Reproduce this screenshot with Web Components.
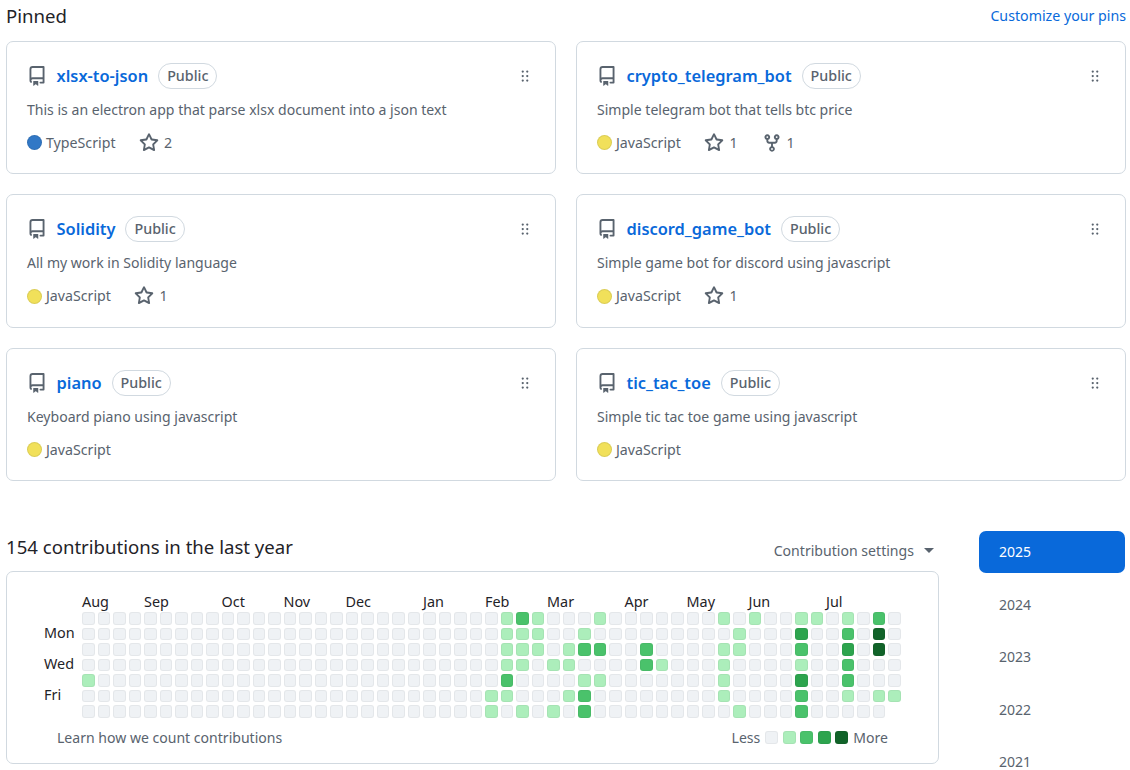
<!DOCTYPE html>
<html><head><meta charset="utf-8"><title>Profile</title>
<style>
html,body{margin:0;padding:0;height:770px;overflow:hidden;background:#fff}
body{font-family:"Noto Sans","Liberation Sans",sans-serif;color:#1f2328}
</style></head><body>
<profile-page></profile-page>
<script>
const P={
repo:'M2 2.5A2.5 2.5 0 0 1 4.5 0h8.75a.75.75 0 0 1 .75.75v12.5a.75.75 0 0 1-.75.75h-2.5a.75.75 0 0 1 0-1.5h1.75v-2h-8a1 1 0 0 0-.714 1.7.75.75 0 1 1-1.072 1.05A2.495 2.495 0 0 1 2 11.5Zm10.5-1h-8a1 1 0 0 0-1 1v6.708A2.486 2.486 0 0 1 4.5 9h8ZM5 12.25a.25.25 0 0 1 .25-.25h3.5a.25.25 0 0 1 .25.25v3.25a.25.25 0 0 1-.4.2l-1.45-1.087a.249.249 0 0 0-.3 0L5.4 15.7a.25.25 0 0 1-.4-.2Z',
star:'M8 .25a.75.75 0 0 1 .673.418l1.882 3.815 4.21.612a.75.75 0 0 1 .416 1.279l-3.046 2.97.719 4.192a.751.751 0 0 1-1.088.791L8 12.347l-3.766 1.98a.75.75 0 0 1-1.088-.79l.72-4.194L.818 6.374a.75.75 0 0 1 .416-1.28l4.21-.611L7.327.668A.75.75 0 0 1 8 .25Zm0 2.445L6.615 5.5a.75.75 0 0 1-.564.41l-3.097.45 2.24 2.184a.75.75 0 0 1 .216.664l-.528 3.084 2.769-1.456a.75.75 0 0 1 .698 0l2.77 1.456-.53-3.084a.75.75 0 0 1 .216-.664l2.24-2.183-3.096-.45a.75.75 0 0 1-.564-.41L8 2.694Z',
fork:'M5 5.372v.878c0 .414.336.75.75.75h4.5a.75.75 0 0 0 .75-.75v-.878a2.25 2.25 0 1 1 1.5 0v.878a2.25 2.25 0 0 1-2.25 2.25h-1.5v2.128a2.251 2.251 0 1 1-1.5 0V8.5h-1.5A2.25 2.25 0 0 1 3.5 6.25v-.878a2.25 2.25 0 1 1 1.5 0ZM5 3.25a.75.75 0 1 0-1.5 0 .75.75 0 0 0 1.5 0Zm6.75.75a.75.75 0 1 0 0-1.5.75.75 0 0 0 0 1.5Zm-3 8.75a.75.75 0 1 0-1.5 0 .75.75 0 0 0 1.5 0Z',
grab:'M10 13a1 1 0 1 1 0-2 1 1 0 0 1 0 2Zm-4 0a1 1 0 1 1 0-2 1 1 0 0 1 0 2Zm1-5a1 1 0 1 1-2 0 1 1 0 0 1 2 0Zm3 1a1 1 0 1 1 0-2 1 1 0 0 1 0 2Zm1-5a1 1 0 1 1-2 0 1 1 0 0 1 2 0ZM6 5a1 1 0 1 1 0-2 1 1 0 0 1 0 2Z'};
const svg=(n,s)=>`<svg width="${s}" height="${s}" viewBox="0 0 16 16" fill="currentColor" aria-hidden="true"><path d="${P[n]}"/></svg>`;
const LANG={TypeScript:'#3178c6',JavaScript:'#f1e05a'};

class PinCard extends HTMLElement{
  connectedCallback(){
    if(this.shadowRoot)return;
    const a=k=>this.getAttribute(k);
    const lang=a('lang-name');
    this.attachShadow({mode:'open'}).innerHTML=`<style>
:host{display:block;box-sizing:border-box;border:1px solid #d1d9e0;border-radius:7px;background:#fff;padding:20px 20px 0 20px;position:relative;height:133.5px;color:#59636e;line-height:22px}
.t{display:flex;align-items:center;height:28px;}
.r{display:flex;width:29.5px;color:#59636e}
.n{font-weight:600;font-size:16.4px;color:#0969da}
.b{margin-left:10px;border:1px solid #d1d9e0;border-radius:14px;font-size:14.3px;font-weight:500;padding:0 8px;height:24px;line-height:24px;color:#59636e}
.g{position:absolute;right:21px;top:25px;display:flex;color:#59636e}
p{margin:9px 0 0;font-size:14.05px;height:22px;line-height:22px;white-space:nowrap}
.m{display:flex;align-items:center;margin-top:11px;height:22px;font-size:14.2px}
.d{width:15px;height:15px;border-radius:50%;margin:0 4px 0 0;box-sizing:border-box;border:1px solid rgba(31,35,40,.1);background:${LANG[lang]}}
.s{display:flex;align-items:center;gap:5px;margin-left:23.5px}
.s+.s{margin-left:24px}
svg{display:block}
</style>
<div class="t"><span class="r">${svg('repo',20)}</span><span class="n">${a('name')}</span><span class="b">Public</span></div>
<span class="g">${svg('grab',18)}</span>
<p><slot></slot></p>
<div class="m"><span class="d"></span><span>${lang}</span>${a('stars')?`<span class="s">${svg('star',20)}<span>${a('stars')}</span></span>`:''}${a('forks')?`<span class="s">${svg('fork',20)}<span>${a('forks')}</span></span>`:''}</div>`;
  }
}
customElements.define('pin-card',PinCard);

const LIT={0:{4:1},26:{5:1,6:1},27:{0:1,1:1,2:1,3:1,4:2,5:1},28:{0:2,1:1,2:1,3:1,6:1},29:{0:1,1:1,2:1},30:{3:1,6:1},31:{2:1,3:1,5:1},32:{1:1,2:2,4:1,5:2,6:2},33:{0:1,2:2,4:1},36:{2:2,3:2},37:{3:1},41:{0:1,2:1,3:1,4:1,5:1},42:{1:1,2:1,6:1},43:{0:1},46:{0:1,1:3,2:2,3:1,4:3,5:2,6:2},47:{0:1},49:{0:1,1:2,2:3,3:2,4:2,5:1},51:{0:2,1:4,2:4,5:1},52:{5:1}};
const MONTHS=[['Aug',0],['Sep',4],['Oct',9],['Nov',13],['Dec',17],['Jan',22],['Feb',26],['Mar',30],['Apr',35],['May',39],['Jun',43],['Jul',48]];
const COL=['#eff2f5','#aceebb','#4ac26b','#2da44e','#116329'];
class ContribGraph extends HTMLElement{
  connectedCallback(){
    if(this.shadowRoot)return;
    let cells='';
    for(let c=0;c<53;c++)for(let r=0;r<7;r++){
      if(c===52&&r===6)continue;
      const l=(LIT[c]&&LIT[c][r])||0;
      cells+=`<i class="l${l}" style="grid-column:${c+1};grid-row:${r+1}"></i>`;
    }
    const mon=MONTHS.map(([m,c])=>`<span style="grid-column:${c+1}/span 4">${m}</span>`).join('');
    const legend=[0,1,2,3,4].map(l=>`<i class="l${l}"></i>`).join('');
    this.attachShadow({mode:'open'}).innerHTML=`<style>
:host{display:block;box-sizing:border-box;width:933px;height:193px;border:1px solid #d1d9e0;border-radius:7px;background:#fff;padding:20px 0 0 0;font-size:14.4px;color:#1f2328}
.w{display:grid;grid-template-columns:75px 1fr;}
.mo{grid-column:2;display:grid;grid-template-columns:repeat(53,12.5px);column-gap:3px;height:20px;line-height:20px;}
.mo span{white-space:nowrap}
.da{display:grid;grid-template-rows:repeat(7,12.5px);row-gap:3px;padding-left:37px;line-height:10.5px}
.da span{white-space:nowrap}
.gr{display:grid;grid-template-columns:repeat(53,12.5px);grid-template-rows:repeat(7,12.5px);gap:3px}
i{display:block;width:12.5px;height:12.5px;border-radius:3px;box-sizing:border-box;border:1px solid rgba(31,35,40,.05)}
.l0{background:${COL[0]}}.l1{background:${COL[1]}}.l2{background:${COL[2]}}.l3{background:${COL[3]}}.l4{background:${COL[4]}}
.f{display:flex;justify-content:space-between;align-items:center;margin-top:9px;padding:0 50px 0 50px;color:#59636e;height:22px;font-size:14.05px}
.lg{display:flex;align-items:center;gap:5px}
.lg .gap{display:flex;gap:4.5px}
.lg i{width:13px;height:13px}
</style>
<div class="w"><div class="mo">${mon}</div>
<div class="da"><span style="grid-row:2">Mon</span><span style="grid-row:4">Wed</span><span style="grid-row:6">Fri</span></div>
<div class="gr">${cells}</div></div>
<div class="f"><span>Learn how we count contributions</span><span class="lg"><span>Less</span><span class="gap">${legend}</span><span>More</span></span></div>`;
  }
}
customElements.define('contrib-graph',ContribGraph);

class YearList extends HTMLElement{
  connectedCallback(){
    if(this.shadowRoot)return;
    const y=[2025,2024,2023,2022,2021];
    this.attachShadow({mode:'open'}).innerHTML=`<style>
:host{display:flex;flex-direction:column;gap:10.5px;width:146px;font-size:14.05px}
a{display:block;height:42px;line-height:42px;padding-left:20px;border-radius:7px;color:#59636e;flex:none}
a.on{background:#0969da;color:#fff}
</style>${y.map((v,i)=>`<a class="${i?'':'on'}">${v}</a>`).join('')}`;
  }
}
customElements.define('year-list',YearList);

class ProfilePage extends HTMLElement{
  connectedCallback(){
    if(this.shadowRoot)return;
    this.attachShadow({mode:'open'}).innerHTML=`<style>
:host{display:block;box-sizing:border-box;width:1130px;height:770px;padding:0 4px 0 6px;overflow:hidden}
.h{display:flex;justify-content:space-between;align-items:center;height:40.5px;padding-bottom:9px;box-sizing:border-box}
.h b{font-weight:400;font-size:18.6px}
.h a{font-size:14.2px;color:#0969da;margin-bottom:1px}
.pins{display:grid;grid-template-columns:550px 550px;column-gap:20px;row-gap:20px}
.c{display:flex;justify-content:space-between;align-items:center;width:933px;margin-top:49px;height:41px}
.c b{font-weight:400;font-size:18.6px;margin-bottom:8px}
.c span{display:flex;align-items:center;gap:10px;font-size:14.1px;color:#59636e;margin-right:5px}
.tri{width:0;height:0;border:5px solid transparent;border-top-color:#59636e;border-bottom:0}
.b{display:flex}
.y{margin-left:40px;margin-top:50px}
</style>
<div class="h"><b>Pinned</b><a>Customize your pins</a></div>
<div class="pins">
<pin-card name="xlsx-to-json" lang-name="TypeScript" stars="2">This is an electron app that parse xlsx document into a json text</pin-card>
<pin-card name="crypto_telegram_bot" lang-name="JavaScript" stars="1" forks="1">Simple telegram bot that tells btc price</pin-card>
<pin-card name="Solidity" lang-name="JavaScript" stars="1">All my work in Solidity language</pin-card>
<pin-card name="discord_game_bot" lang-name="JavaScript" stars="1">Simple game bot for discord using javascript</pin-card>
<pin-card name="piano" lang-name="JavaScript">Keyboard piano using javascript</pin-card>
<pin-card name="tic_tac_toe" lang-name="JavaScript">Simple tic tac toe game using javascript</pin-card>
</div>
<div class="b"><div><div class="c"><b>154 contributions in the last year</b><span>Contribution settings <i class="tri"></i></span></div><contrib-graph></contrib-graph></div>
<year-list class="y"></year-list></div>`;
  }
}
customElements.define('profile-page',ProfilePage);
</script>
</body></html>
